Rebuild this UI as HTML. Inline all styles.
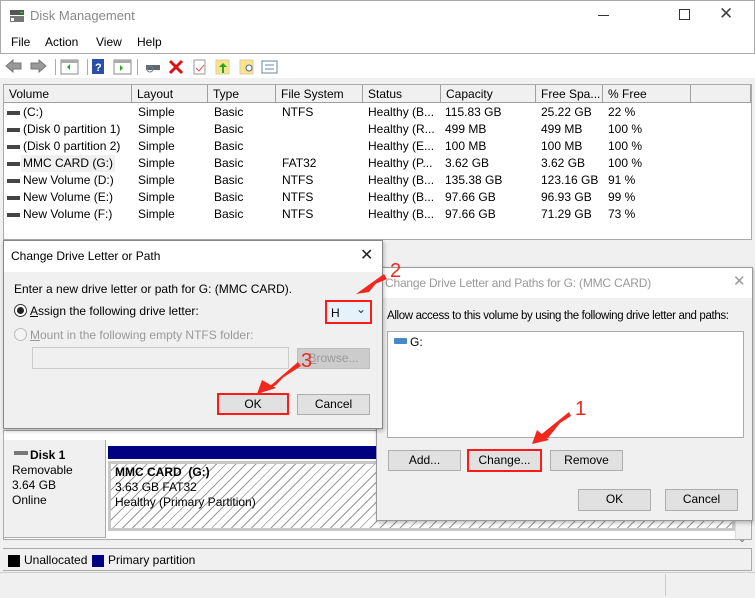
<!DOCTYPE html>
<html><head><meta charset="utf-8"><style>
*{box-sizing:border-box;margin:0;padding:0}
body{width:755px;height:598px;overflow:hidden;background:#f0f0f0;font-family:"Liberation Sans",sans-serif;font-size:12px;color:#000;position:relative}
.a{position:absolute;white-space:nowrap}
.btn{position:absolute;background:#e1e1e1;border:1px solid #adadad;text-align:center;line-height:19px;font-size:12px}
.hd{position:absolute;top:85px;height:18px;background:#f0f0f0;border-right:1px solid #a0a0a0;border-bottom:1px solid #a0a0a0;padding-left:5px;line-height:18px;font-size:12px}
.row{position:absolute;left:4px;height:17px;width:700px;font-size:12px;line-height:17px}
.row span{position:absolute}
.red{border:2px solid #ff1a1a!important}
</style></head><body>
<div class="a" style="left:0;top:0;width:755px;height:33px;background:#fff;border:1px solid #aaa;border-bottom:none"></div>
<svg class="a" style="left:9px;top:9px" width="16" height="14"><rect x="1" y="1" width="14" height="5" fill="#555"/><rect x="1" y="7" width="14" height="6" fill="#777"/><rect x="11" y="3" width="3" height="1" fill="#3c3"/><rect x="2" y="9" width="3" height="3" fill="#fff"/></svg>
<div class="a" style="left:30px;top:8px;font-size:13px;color:#888">Disk Management</div>
<div class="a" style="left:598px;top:15px;width:11px;height:1px;background:#333"></div>
<div class="a" style="left:679px;top:9px;width:11px;height:11px;border:1px solid #333"></div>
<div class="a" style="left:719px;top:4px;font-size:17px;color:#444">✕</div>
<div class="a" style="left:0;top:33px;width:755px;height:20px;background:#fff;border-left:1px solid #aaa;border-right:1px solid #aaa"></div>
<div class="a" style="left:11px;top:35px;font-size:12px">File</div>
<div class="a" style="left:45px;top:35px">Action</div>
<div class="a" style="left:96px;top:35px">View</div>
<div class="a" style="left:137px;top:35px">Help</div>
<div class="a" style="left:0;top:53px;width:755px;height:1px;background:#aaa"></div>
<div class="a" style="left:0;top:54px;width:755px;height:24px;background:#fff"></div>
<svg class="a" style="left:4px;top:57px" width="280" height="20">
<path d="M2 9 L9 3 V6 H17 V12 H9 V15 Z" fill="#999" stroke="#777"/>
<path d="M42 9 L35 3 V6 H27 V12 H35 V15 Z" fill="#999" stroke="#777"/>
<rect x="51" y="2" width="1" height="16" fill="#aaa"/>
<rect x="57" y="3" width="17" height="14" fill="#fff" stroke="#888"/><rect x="57" y="3" width="17" height="3" fill="#aaa"/><path d="M63 10 l3 -3 v6z" fill="#2a2"/>
<rect x="83" y="2" width="1" height="16" fill="#aaa"/>
<rect x="88" y="2" width="12" height="15" fill="#2a4fa8"/><text x="91" y="14" font-size="11" fill="#fff" font-family="Liberation Sans" font-weight="bold">?</text>
<rect x="110" y="3" width="17" height="14" fill="#fff" stroke="#888"/><rect x="110" y="3" width="17" height="3" fill="#aaa"/><path d="M116 8 l3 3 -3 3z" fill="#2a2"/>
<rect x="133" y="2" width="1" height="16" fill="#aaa"/>
<rect x="142" y="8" width="14" height="5" fill="#666"/><circle cx="146" cy="12" r="3" fill="none" stroke="#58a"/>
<path d="M166 4 L178 16 M178 4 L166 16" stroke="#d11" stroke-width="3"/>
<rect x="190" y="3" width="11" height="14" fill="#fff" stroke="#999"/><path d="M192 11 l3 3 5 -6" stroke="#e55" fill="none"/>
<rect x="212" y="3" width="13" height="14" fill="#fbe38a" stroke="#dca"/><path d="M218 16 v-6 h-3 l4 -4 4 4 h-3 v6z" fill="#2a2"/>
<rect x="236" y="3" width="13" height="14" fill="#fbe38a" stroke="#dca"/><circle cx="245" cy="11" r="3" fill="#fff" stroke="#468"/>
<rect x="258" y="4" width="15" height="12" fill="#fff" stroke="#68a"/><path d="M261 8 h9 M261 12 h9" stroke="#68a"/>
</svg>
<div class="a" style="left:3px;top:84px;width:749px;height:156px;background:#fff;border:1px solid #aaa"></div>
<div class="hd" style="left:4px;width:128px">Volume</div>
<div class="hd" style="left:132px;width:76px">Layout</div>
<div class="hd" style="left:208px;width:68px">Type</div>
<div class="hd" style="left:276px;width:87px">File System</div>
<div class="hd" style="left:363px;width:78px">Status</div>
<div class="hd" style="left:441px;width:95px">Capacity</div>
<div class="hd" style="left:536px;width:67px">Free Spa...</div>
<div class="hd" style="left:603px;width:88px">% Free</div>
<div class="hd" style="left:691px;width:60px"></div>
<div class="row" style="top:104px"><span style="left:3px;top:7px;width:13px;height:4px;background:#444"></span><span style="left:19px">(C:)</span><span style="left:134px">Simple</span><span style="left:210px">Basic</span><span style="left:278px">NTFS</span><span style="left:364px">Healthy (B...</span><span style="left:441px">115.83 GB</span><span style="left:537px">25.22 GB</span><span style="left:604px">22 %</span></div>
<div class="row" style="top:121px"><span style="left:3px;top:7px;width:13px;height:4px;background:#444"></span><span style="left:19px">(Disk 0 partition 1)</span><span style="left:134px">Simple</span><span style="left:210px">Basic</span><span style="left:364px">Healthy (R...</span><span style="left:441px">499 MB</span><span style="left:537px">499 MB</span><span style="left:604px">100 %</span></div>
<div class="row" style="top:138px"><span style="left:3px;top:7px;width:13px;height:4px;background:#444"></span><span style="left:19px">(Disk 0 partition 2)</span><span style="left:134px">Simple</span><span style="left:210px">Basic</span><span style="left:364px">Healthy (E...</span><span style="left:441px">100 MB</span><span style="left:537px">100 MB</span><span style="left:604px">100 %</span></div>
<div class="row" style="top:155px"><span style="left:3px;top:7px;width:13px;height:4px;background:#444"></span><span style="left:17px;background:#f0f0f0;padding:0 2px">MMC CARD (G:)</span><span style="left:134px">Simple</span><span style="left:210px">Basic</span><span style="left:278px">FAT32</span><span style="left:364px">Healthy (P...</span><span style="left:441px">3.62 GB</span><span style="left:537px">3.62 GB</span><span style="left:604px">100 %</span></div>
<div class="row" style="top:172px"><span style="left:3px;top:7px;width:13px;height:4px;background:#444"></span><span style="left:19px">New Volume (D:)</span><span style="left:134px">Simple</span><span style="left:210px">Basic</span><span style="left:278px">NTFS</span><span style="left:364px">Healthy (B...</span><span style="left:441px">135.38 GB</span><span style="left:537px">123.16 GB</span><span style="left:604px">91 %</span></div>
<div class="row" style="top:189px"><span style="left:3px;top:7px;width:13px;height:4px;background:#444"></span><span style="left:19px">New Volume (E:)</span><span style="left:134px">Simple</span><span style="left:210px">Basic</span><span style="left:278px">NTFS</span><span style="left:364px">Healthy (B...</span><span style="left:441px">97.66 GB</span><span style="left:537px">96.93 GB</span><span style="left:604px">99 %</span></div>
<div class="row" style="top:206px"><span style="left:3px;top:7px;width:13px;height:4px;background:#444"></span><span style="left:19px">New Volume (F:)</span><span style="left:134px">Simple</span><span style="left:210px">Basic</span><span style="left:278px">NTFS</span><span style="left:364px">Healthy (B...</span><span style="left:441px">97.66 GB</span><span style="left:537px">71.29 GB</span><span style="left:604px">73 %</span></div>
<div class="a" style="left:3px;top:430px;width:749px;height:110px;background:#fff;border:1px solid #aaa"></div>
<div class="a" style="left:4px;top:440px;width:102px;height:98px;background:#f0f0f0;border-right:1px solid #aaa;border-bottom:1px solid #aaa"></div>
<div class="a" style="left:14px;top:451px;width:14px;height:4px;background:#777"></div>
<div class="a" style="left:30px;top:448px;font-weight:bold">Disk 1</div>
<div class="a" style="left:12px;top:463px;line-height:15px">Removable<br>3.64 GB<br>Online</div>
<div class="a" style="left:108px;top:446px;width:627px;height:13px;background:#000080"></div>
<div class="a" style="left:108px;top:461px;width:627px;height:70px;border:3px solid #c8c8c8;background:repeating-linear-gradient(135deg,#fff 0 4px,#999 4px 5px,#fff 5px 7px)"></div>
<div class="a" style="left:115px;top:465px;line-height:15px"><b>MMC CARD&nbsp; (G:)</b><br>3.63 GB FAT32<br>Healthy (Primary Partition)</div>
<div class="a" style="left:735px;top:431px;width:16px;height:108px;background:#f0f0f0;border-left:1px solid #ddd"></div>
<div class="a" style="left:738px;top:534px;font-size:10px;color:#666">⌄</div>
<div class="a" style="left:3px;top:548px;width:749px;height:23px;border:1px solid #aaa;border-left:none;background:#f0f0f0"></div>
<div class="a" style="left:8px;top:555px;width:12px;height:12px;background:#000"></div>
<div class="a" style="left:24px;top:553px">Unallocated</div>
<div class="a" style="left:92px;top:555px;width:12px;height:12px;background:#000080"></div>
<div class="a" style="left:108px;top:553px">Primary partition</div>
<div class="a" style="left:0;top:572px;width:755px;height:1px;background:#ccc"></div>
<div class="a" style="left:665px;top:574px;width:1px;height:22px;background:#ccc"></div>
<!-- right dialog -->
<div class="a" style="left:376px;top:267px;width:377px;height:254px;background:#f0f0f0;border:1px solid #999;box-shadow:1px 2px 4px rgba(0,0,0,.25)"></div>
<div class="a" style="left:377px;top:268px;width:375px;height:30px;background:#fff"></div>
<div class="a" style="left:385px;top:276px;font-size:12px;letter-spacing:-0.2px;color:#999">Change Drive Letter and Paths for G: (MMC CARD)</div>
<div class="a" style="left:733px;top:272px;font-size:15px;color:#999">✕</div>
<div class="a" style="left:387px;top:310px;font-size:11.5px;letter-spacing:-0.35px">Allow access to this volume by using the following drive letter and paths:</div>
<div class="a" style="left:387px;top:331px;width:357px;height:107px;background:#fff;border:1px solid #aaa"></div>
<div class="a" style="left:394px;top:338px;width:13px;height:6px;background:#4a88c8;border-radius:1px"></div>
<div class="a" style="left:410px;top:335px">G:</div>
<div class="btn" style="left:388px;top:450px;width:73px;height:21px">Add...</div>
<div class="btn red" style="left:467px;top:449px;width:75px;height:23px">Change...</div>
<div class="btn" style="left:550px;top:450px;width:73px;height:21px">Remove</div>
<div class="btn" style="left:578px;top:489px;width:73px;height:22px">OK</div>
<div class="btn" style="left:665px;top:489px;width:73px;height:22px">Cancel</div>
<!-- left dialog -->
<div class="a" style="left:3px;top:240px;width:380px;height:189px;background:#f0f0f0;border:1px solid #888;box-shadow:1px 2px 4px rgba(0,0,0,.25)"></div>
<div class="a" style="left:4px;top:241px;width:378px;height:31px;background:#fff"></div>
<div class="a" style="left:11px;top:249px;font-size:12px">Change Drive Letter or Path</div>
<div class="a" style="left:360px;top:245px;font-size:16px;color:#222">✕</div>
<div class="a" style="left:14px;top:282px">Enter a new drive letter or path for G: (MMC CARD).</div>
<div class="a" style="left:14px;top:304px;width:13px;height:13px;border:1px solid #333;border-radius:50%;background:#fff"></div>
<div class="a" style="left:17px;top:307px;width:7px;height:7px;border-radius:50%;background:#222"></div>
<div class="a" style="left:30px;top:304px"><u>A</u>ssign the following drive letter:</div>
<div class="a red" style="left:325px;top:300px;width:47px;height:24px;background:#e5f1fb"></div>
<div class="a" style="left:331px;top:306px">H</div>
<div class="a" style="left:356px;top:302px;font-size:12px;color:#333">⌄</div>
<div class="a" style="left:14px;top:328px;width:13px;height:13px;border:1px solid #bbb;border-radius:50%;background:#f4f4f4"></div>
<div class="a" style="left:30px;top:328px;color:#999"><u>M</u>ount in the following empty NTFS folder:</div>
<div class="a" style="left:32px;top:347px;width:257px;height:22px;border:1px solid #ccc;background:#f0f0f0"></div>
<div class="a" style="left:297px;top:348px;width:73px;height:21px;border:1px solid #bfbfbf;background:#ccc;color:#999;line-height:19px;text-align:center"><u>B</u>rowse...</div>
<div class="btn red" style="left:217px;top:393px;width:72px;height:22px">OK</div>
<div class="btn" style="left:297px;top:394px;width:73px;height:21px">Cancel</div>
<svg class="a" style="left:0;top:0" width="755" height="598">
<g fill="#f0281e">
<path d="M384 274 L356 294 L369 292Z M387 279 L384 274 L366 288Z"/>
<path d="M298 362 L263 392 L276 385Z M301 366 L298 362 L270 386Z"/>
<path d="M257 394 L262 380 L276 388Z"/>
<path d="M569 412 L538 437 L548 438Z M571 416 L569 412 L543 434Z"/>
<path d="M532 444 L537 430 L549 440Z"/>
</g>
<g fill="#f0281e" font-family="Liberation Sans" font-size="20">
<text x="390" y="277">2</text><text x="301" y="367">3</text><text x="575" y="415">1</text>
</g>
</svg>
</body></html>
